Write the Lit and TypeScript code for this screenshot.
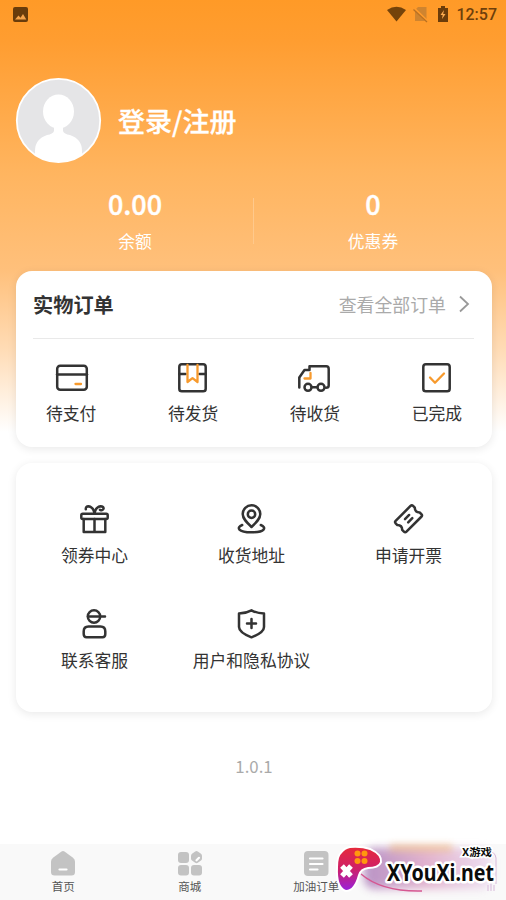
import { LitElement, html, css, svg } from "lit";
import { customElement } from "lit/decorators.js";

const icons: Record<string, unknown> = {
  card: svg`<rect x="2.200" y="2.700" width="29.600" height="24" rx="3"/><path d="M2 11.500H32"/><path class="accent" d="M20.500 21h5.500"/>`,
  parcel: svg`<rect x="1.300" y="1.300" width="26.400" height="27" rx="2.600"/><path d="M1.500 11h6M21.500 11h6"/><path class="accent" d="M9.500 2v17l5-3.800 5 3.800V2"/>`,
  truck: svg`<path d="M1.300 24.500V14.500L6.500 7H11.500V3.300H28.200Q30.700 3.300 30.700 6V22.500Q30.700 24.800 28 24.800"/><circle cx="10" cy="24.300" r="3.500"/><circle cx="23" cy="24.300" r="3.500"/><path d="M14 24.300h5"/><path class="accent" d="M12.500 10v5.500H6.500"/>`,
  done: svg`<rect x="1.300" y="1.300" width="26.400" height="27" rx="2.600"/><path class="accent" d="M8 14.500l5 5.200L22 10.500"/>`,
  gift: svg`<rect x="1.300" y="9.700" width="26.400" height="5.300" rx="1.500"/><path d="M3.700 15V28H25.300V15M14.500 15V28M14.500 9.500Q13.500 3.200 8.500 2.300Q5.500 2.300 5.800 5.300M14.500 9.500Q15.500 3.200 20.500 2.300Q24 2.300 23.500 4.800Q22.500 7 20 5.800"/>`,
  pin: svg`<path d="M14.500 23C9.500 18.300 5.700 14.600 5.700 10.100A8.800 8.800 0 0 1 23.300 10.100C23.300 14.600 19.500 18.300 14.500 23Z"/><circle cx="14.500" cy="10.200" r="3.700"/><path d="M5.200 21C-.8 23.500 .8 28.300 14.500 28.300S29.800 23.500 23.800 21"/>`,
  ticket: svg`<g transform="translate(14.500 14.800) rotate(-45) scale(.9) translate(-15 -15)" stroke-width="2.800"><path d="M3.300 6.500H26.700Q28.700 6.500 28.700 8.500V11.200Q25 15 28.700 18.800V21.500Q28.700 23.500 26.700 23.500H3.300Q1.300 23.500 1.300 21.500V18.800Q5 15 1.300 11.200V8.500Q1.300 6.500 3.300 6.500Z"/><path d="M12 12.500H18.500M12 17.500H18.500"/></g>`,
  service: svg`<circle cx="14" cy="7.500" r="6.200"/><path d="M8 7.500H25M8.500 17.500H20.500Q25.300 17.500 25.300 22.500V25Q25.300 28.200 22.500 28.200H6.500Q3.700 28.200 3.700 25V22.500Q3.700 17.500 8.500 17.500Z"/>`,
  shield: svg`<path d="M14.500 1.300Q20 4.300 27 4.500V18Q27 23.500 14.500 28.300Q2 23.500 2 18V4.500Q9 4.300 14.500 1.300Z"/><path d="M14.500 10v9M10 14.500h9"/>`,
};

const orders = [
  ["card", "待支付"],
  ["parcel", "待发货"],
  ["truck", "待收货"],
  ["done", "已完成"],
];
const services = [
  ["gift", "领券中心"],
  ["pin", "收货地址"],
  ["ticket", "申请开票"],
  ["service", "联系客服"],
  ["shield", "用户和隐私协议"],
];
const tabs = [
  {
    label: "首页",
    icon: svg`<path class="fill" d="M10.500 1.500Q12 .5 13.500 1.500L22 7.800Q24 9.300 24 11.500V22Q24 25.500 20.500 25.500H3.500Q0 25.500 0 22V11.500Q0 9.300 2 7.800Z"/><path class="mark" d="M8.500 19.500H15.500"/>`,
  },
  {
    label: "商城",
    icon: svg`<rect class="fill" y="2" width="11" height="11" rx="3"/><rect class="fill" y="15" width="11" height="10.500" rx="3"/><rect class="fill" x="13" y="15" width="11" height="10.500" rx="3"/><path class="fill" d="M17.200 1.500Q18.500 .7 19.800 1.500L23 3.800Q24 4.600 24 6V8.500Q24 9.800 23 10.500L19.800 12.800Q18.500 13.600 17.200 12.800L14 10.500Q13 9.800 13 8.500V6Q13 4.600 14 3.800Z"/><path class="mark" d="M18.500 10.300L21 7.800"/>`,
  },
  {
    label: "加油订单",
    icon: svg`<rect class="fill" y="1" width="24.500" height="25" rx="4"/><path class="mark" d="M6 8.500H18.500M6 14H18.500M6 19.500H13.500"/>`,
  },
];

@customElement("app-root")
export class AppRoot extends LitElement {
  static styles = css`
    :host {
      display: flex;
      flex-direction: column;
      position: relative;
      box-sizing: border-box;
      width: 506px;
      height: 900px;
      overflow: hidden;
      font-family: "Noto Sans CJK SC", sans-serif;
      color: #333;
      background: linear-gradient(#ff9a27 0, #ff9d30 40px, #ffb560 175px, #ffc07b 270px, #ffdcb6 350px, #fff 432px);
    }
    svg { display: block; overflow: visible; fill: none; }
    .status { display: flex; align-items: center; height: 28px; padding: 0 9px 0 13px; color: #6e3f0b; }
    .status .space { flex: 1; }
    .signals { width: 62px; margin-right: -1px; }
    .clock { font: 500 16px/28px Roboto, sans-serif; margin: 1px 0 0 8px; }
    .profile { display: flex; align-items: center; gap: 17px; height: 86px; margin: 50px 15px 0; }
    .login { font-size: 27px; line-height: 40px; font-weight: 500; color: #fff; -webkit-text-stroke: 0.3px #fff; }
    .stats { display: grid; grid-template-columns: 1fr 1fr; height: 107px; margin: 0 15px; color: #fff; }
    .stat { display: flex; flex-direction: column; align-items: center; padding: 20px 0 0 2px; }
    .stat b { font-size: 27px; line-height: 40px; font-weight: 500; -webkit-text-stroke: 0.4px #fff; }
    .stat span { font-size: 16.8px; line-height: 24px; margin-top: 5px; }
    .stat + .stat { background: linear-gradient(#ffc98c, #ffc98c) 0 34px / 1px 46px no-repeat; }
    .panel { background: #fff; border-radius: 16px; margin: 0 14px 0 16px; box-shadow: 0 2px 10px rgba(0, 0, 0, 0.09); }
    .orders { height: 176px; }
    .head { display: flex; align-items: center; justify-content: space-between; height: 67px; margin: 0 18px 0 17px; border-bottom: 1px solid #e9e9e9; }
    .head h2 { margin: 0; font-size: 20.2px; line-height: 30px; font-weight: 700; }
    .all { display: flex; align-items: center; gap: 13px; padding: 0 5px 2px 0; font-size: 17.9px; line-height: 28px; color: #aaa; }
    .row { display: flex; justify-content: space-between; padding: 24px 30px 0; }
    .item { display: flex; flex-direction: column; align-items: center; gap: 9px; font-size: 16.8px; line-height: 25px; white-space: nowrap; }
    .icon { margin-left: -1px; stroke: #333; stroke-width: 2.5; stroke-linecap: round; stroke-linejoin: round; }
    .icon .accent { stroke: #f79a2d; stroke-width: 2.3; }
    .orders .item { gap: 8px; }
    .services { display: grid; grid-template-columns: repeat(3, 157px); grid-auto-rows: 105px; height: 208px; margin-top: 16px; padding-top: 41px; }
    .version { height: 132px; line-height: 109px; text-align: center; font-size: 16.8px; color: #aaa; padding-left: 2px; }
    .tabs { display: grid; grid-template-columns: repeat(4, 1fr); flex: 1; background: #f9f9f9; }
    .tab { display: flex; flex-direction: column; align-items: center; padding-top: 6px; gap: 2px; font-size: 11.5px; line-height: 17px; color: #555; }
    .fill { fill: #c3c3c3; }
    .mark { stroke: #fff; stroke-width: 2.2; stroke-linecap: round; }
    .sponsor { position: absolute; right: 0; bottom: 0; }
    .site { font-family: "Noto Sans", sans-serif; font-weight: 700; font-size: 23.500px; fill: #0b0b0b; stroke: #fff; stroke-width: 5px; stroke-linejoin: round; paint-order: stroke; }
    .brand { font-family: "Noto Sans CJK SC", sans-serif; font-weight: 700; font-size: 10px; fill: #0b0b0b; stroke: #fff; stroke-width: 3px; paint-order: stroke; }
  `;

  private item([icon, label]: string[]) {
    const w = icon === "card" || icon === "truck" ? 32 : 29;
    return html`<div class="item">
      <svg class="icon" width=${w} height="30" viewBox="0 0 ${w} 30">${icons[icon]}</svg>
      <span>${label}</span>
    </div>`;
  }

  render() {
    return html`
      <div class="status">
        <svg width="15" height="15" viewBox="0 0 15 15"><rect width="15" height="15" rx="2" fill="#693c0b"/><path d="M2 12.500l3.500-4 2 2.300L10 7l3.300 5.500z" fill="#f5a34a"/></svg>
        <span class="space"></span>
        <svg class="signals" height="18" viewBox="0 0 62 18">
          <path d="M0 5Q9.500-1.500 19 5L9.500 16.500Z" fill="#75430a"/>
          <path d="M31 2h8.500v14H28V5z" fill="#cf842f"/><path d="M27 3.500L41 17" stroke="#ff9b2b" stroke-width="2.500"/><path d="M26.500 4.500L40 17" stroke="#b87022" stroke-width="1.300"/>
          <path d="M51 3h3V1h4v2h3v14H51z" fill="#6b3c0a"/><path d="M57 5l-3.500 5h2.200L55 14l3.500-5h-2.300z" fill="#ffad50"/>
        </svg>
        <span class="clock">12:57</span>
      </div>
      <div class="profile">
        <svg width="86" height="86" viewBox="0 0 86 86">
          <defs><clipPath id="face"><circle cx="43.500" cy="42.500" r="41.500"/></clipPath></defs>
          <circle cx="43.500" cy="42.500" r="41.700" fill="#e5e5e7" stroke="#fff" stroke-width="1.800"/>
          <g clip-path="url(#face)" fill="#fff"><ellipse cx="43.500" cy="33.500" rx="15.500" ry="17"/><path d="M39 46h9v7Q49 56 55 57Q67 61 67 73V86H20V73Q20 61 32 57Q38 56 39 53Z"/></g>
        </svg>
        <div class="login">登录/注册</div>
      </div>
      <div class="stats">
        <div class="stat"><b>0.00</b><span>余额</span></div>
        <div class="stat"><b>0</b><span>优惠券</span></div>
      </div>
      <section class="panel orders">
        <div class="head">
          <h2>实物订单</h2>
          <div class="all">查看全部订单
            <svg width="10" height="18" viewBox="0 0 10 18"><path d="M1 1.500L9 9L1 16.500" stroke="#999" stroke-width="1.800"/></svg>
          </div>
        </div>
        <div class="row">${orders.map((o) => this.item(o))}</div>
      </section>
      <section class="panel services">${services.map((s) => this.item(s))}</section>
      <div class="version">1.0.1</div>
      <nav class="tabs">
        ${tabs.map((t) => html`<div class="tab"><svg width="24" height="26" viewBox="0 0 24 26">${t.icon}</svg><span>${t.label}</span></div>`)}
      </nav>
      <svg class="sponsor" width="176" height="65" viewBox="0 0 176 65">
        <defs>
          <linearGradient id="pad" x1="0" y1="0" x2="0" y2="1"><stop offset="0" stop-color="#e52a3c"/><stop offset=".5" stop-color="#cf2068"/><stop offset="1" stop-color="#9a20d8"/></linearGradient>
          <linearGradient id="haze" x1="0" y1="0" x2="1" y2="0"><stop offset="0" stop-color="#a879b8"/><stop offset=".5" stop-color="#dda3c5"/><stop offset="1" stop-color="#ead9ef"/></linearGradient>
          <filter id="soft" x="-20%" y="-40%" width="140%" height="180%"><feGaussianBlur stdDeviation="4"/></filter>
          <filter id="glow" filterUnits="userSpaceOnUse" x="40" y="-5" width="110" height="35"><feGaussianBlur stdDeviation="3.500"/></filter>
        </defs>
        <rect x="34" y="13" width="127" height="41" rx="10" fill="url(#haze)" opacity=".8" filter="url(#soft)"/>
        <path d="M60 13H122" stroke="#efae62" stroke-width="8" opacity=".45" filter="url(#glow)"/>
        <path d="M31 39Q52 57 92 56" stroke="#d65791" stroke-width="1.500"/>
        <path d="M158 17Q165 16 166 23V49M158 50v6M161 48v8M164 50v6" stroke="#d7b9da" stroke-width="1"/>
        <path d="M20 13Q31 12 40 15Q51 20 50 27Q48 32 38 32Q30 33 28 40Q24 55 16 55Q7 52 8 32Q8 21 12 18Q15 14 20 13Z" fill="url(#pad)" stroke="#fff" stroke-width="4" style="paint-order:stroke"/>
        <g fill="#ff980e"><circle cx="27.500" cy="18.500" r="3"/><circle cx="34.500" cy="18.500" r="3"/><circle cx="27.500" cy="26" r="3"/><circle cx="34.500" cy="26" r="3"/></g>
        <path d="M12 31L21 41M21 31L12 41" stroke="#fff" stroke-width="5"/>
        <text class="site" x="57" y="45.500" textLength="107" lengthAdjust="spacingAndGlyphs">XYouXi.net</text>
        <text class="brand" x="132" y="20.500" textLength="30" lengthAdjust="spacingAndGlyphs">X游戏</text>
      </svg>
    `;
  }
}
